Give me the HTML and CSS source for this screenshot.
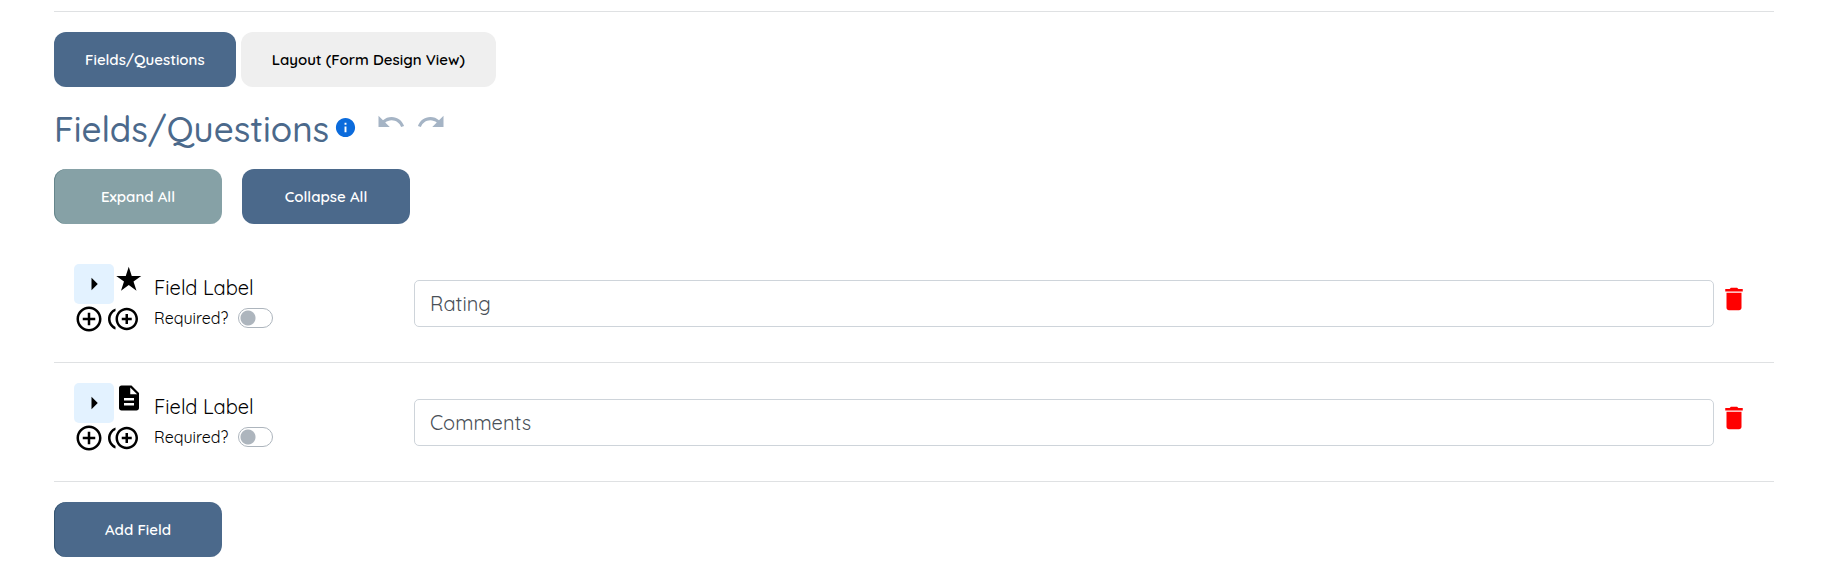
FILE: index.html
```html
<!DOCTYPE html>
<html lang="en">
<head>
    <meta charset="UTF-8">
    <meta name="viewport" content="width=device-width, initial-scale=1.0">
    <title>Fields/Questions</title>
    <link rel="stylesheet" href="styles.css">
</head>
<body>
    <nav class="tabs">
        <button type="button" class="btn tab active">Fields/Questions</button>
        <button type="button" class="btn tab">Layout (Form Design View)</button>
    </nav>

    <div class="title-bar">
        <h1>Fields/Questions</h1>
        <svg class="info" viewBox="0 0 24 24"><path d="M12 2C6.48 2 2 6.48 2 12s4.48 10 10 10 10-4.48 10-10S17.52 2 12 2zm1 15h-2v-6h2v6zm0-8h-2V7h2v2z"/></svg>
        <div class="history">
            <button type="button" class="icon-btn" aria-label="Undo" disabled>
                <svg class="icon" viewBox="0 0 24 24"><path d="M12.5 8c-2.65 0-5.05.99-6.9 2.6L2 7v9h9l-3.62-3.62c1.39-1.16 3.16-1.88 5.12-1.88 3.54 0 6.55 2.31 7.6 5.5l2.37-.78C21.08 11.03 17.15 8 12.5 8z"/></svg>
            </button>
            <button type="button" class="icon-btn" aria-label="Redo" disabled>
                <svg class="icon" viewBox="0 0 24 24"><path d="M18.4 10.6C16.55 8.99 14.15 8 11.5 8c-4.65 0-8.58 3.03-9.96 7.22L3.9 16c1.05-3.19 4.05-5.5 7.6-5.5 1.95 0 3.73.72 5.12 1.88L13 16h9V7l-3.6 3.6z"/></svg>
            </button>
        </div>
    </div>

    <div class="actions">
        <button type="button" class="btn action expand">Expand All</button>
        <button type="button" class="btn action">Collapse All</button>
    </div>

    <form id="fieldsForm">
        <div class="field-row">
            <div class="tools">
                <div class="tools-line">
                    <button type="button" class="toggle" aria-label="Expand field">
                        <svg class="icon" viewBox="0 0 24 24"><path d="m10 17 5-5-5-5v10z"/></svg>
                    </button>
                    <svg class="icon" viewBox="0 0 24 24"><path d="M11.8 2.2 14.2 9.5H21.8L15.6 14 18 21.4 11.8 16.8 5.6 21.4 8 14 1.8 9.5H9.4z"/></svg>
                </div>
                <div class="tools-line add-line">
                    <button type="button" class="icon-btn" aria-label="Add field below">
                        <svg class="icon" viewBox="0 0 24 24"><path d="M13 7h-2v4H7v2h4v4h2v-4h4v-2h-4V7zm-1-5C6.48 2 2 6.48 2 12s4.48 10 10 10 10-4.48 10-10S17.52 2 12 2zm0 18c-4.41 0-8-3.59-8-8s3.59-8 8-8 8 3.59 8 8-3.59 8-8 8z"/></svg>
                    </button>
                    <button type="button" class="icon-btn" aria-label="Duplicate field">
                        <svg class="icon" viewBox="0 0 24 24"><path d="M16 8v3h3v2h-3v3h-2v-3h-3v-2h3V8h2zM2 12c0-2.79 1.64-5.2 4.01-6.32V3.52C2.52 4.76 0 8.09 0 12s2.52 7.24 6.01 8.48v-2.16C3.64 17.2 2 14.79 2 12zm13-9c-4.96 0-9 4.04-9 9s4.04 9 9 9 9-4.04 9-9-4.04-9-9-9zm0 16c-3.86 0-7-3.14-7-7s3.14-7 7-7 7 3.14 7 7-3.14 7-7 7z"/></svg>
                    </button>
                </div>
            </div>
            <div class="labels">
                <label class="field-label" for="field1">Field Label</label>
                <div class="required">
                    <label for="required1">Required?</label>
                    <input type="checkbox" class="switch" id="required1" role="switch">
                </div>
            </div>
            <input type="text" class="field-input" id="field1" value="Rating">
            <button type="button" class="icon-btn delete" aria-label="Delete field">
                <svg class="icon" viewBox="0 0 24 24"><path d="M6 19c0 1.1.9 2 2 2h8c1.1 0 2-.9 2-2V7H6v12zM19 4h-3.5l-1-1h-5l-1 1H5v2h14V4z"/></svg>
            </button>
        </div>

        <div class="field-row">
            <div class="tools">
                <div class="tools-line">
                    <button type="button" class="toggle" aria-label="Expand field">
                        <svg class="icon" viewBox="0 0 24 24"><path d="m10 17 5-5-5-5v10z"/></svg>
                    </button>
                    <svg class="icon" viewBox="0 0 24 24"><path d="M14 2H6c-1.1 0-1.99.9-1.99 2L4 20c0 1.1.89 2 1.99 2H18c1.1 0 2-.9 2-2V8l-6-6zm2 16H8v-2h8v2zm0-4H8v-2h8v2zm-3-5V3.5L18.5 9H13z"/></svg>
                </div>
                <div class="tools-line add-line">
                    <button type="button" class="icon-btn" aria-label="Add field below">
                        <svg class="icon" viewBox="0 0 24 24"><path d="M13 7h-2v4H7v2h4v4h2v-4h4v-2h-4V7zm-1-5C6.48 2 2 6.48 2 12s4.48 10 10 10 10-4.48 10-10S17.52 2 12 2zm0 18c-4.41 0-8-3.59-8-8s3.59-8 8-8 8 3.59 8 8-3.59 8-8 8z"/></svg>
                    </button>
                    <button type="button" class="icon-btn" aria-label="Duplicate field">
                        <svg class="icon" viewBox="0 0 24 24"><path d="M16 8v3h3v2h-3v3h-2v-3h-3v-2h3V8h2zM2 12c0-2.79 1.64-5.2 4.01-6.32V3.52C2.52 4.76 0 8.09 0 12s2.52 7.24 6.01 8.48v-2.16C3.64 17.2 2 14.79 2 12zm13-9c-4.96 0-9 4.04-9 9s4.04 9 9 9 9-4.04 9-9-4.04-9-9-9zm0 16c-3.86 0-7-3.14-7-7s3.14-7 7-7 7 3.14 7 7-3.14 7-7 7z"/></svg>
                    </button>
                </div>
            </div>
            <div class="labels">
                <label class="field-label" for="field2">Field Label</label>
                <div class="required">
                    <label for="required2">Required?</label>
                    <input type="checkbox" class="switch" id="required2" role="switch">
                </div>
            </div>
            <input type="text" class="field-input" id="field2" value="Comments">
            <button type="button" class="icon-btn delete" aria-label="Delete field">
                <svg class="icon" viewBox="0 0 24 24"><path d="M6 19c0 1.1.9 2 2 2h8c1.1 0 2-.9 2-2V7H6v12zM19 4h-3.5l-1-1h-5l-1 1H5v2h14V4z"/></svg>
            </button>
        </div>

        <button type="button" class="btn action add-field">Add Field</button>
    </form>
</body>
</html>
```
FILE: styles.css
```css
* {
    box-sizing: border-box;
}
body {
    margin: 0;
    padding: 11px 47px 0 54px;
    font-family: Quicksand, Lato, sans-serif;
    color: #000;
    background-color: #fff;
}
button,
input {
    font-family: inherit;
    margin: 0;
}
.btn {
    height: 55px;
    border: none;
    border-radius: 12px;
    font-size: 15px;
    font-weight: 600;
    color: #fff;
    background-color: #4b698b;
    cursor: pointer;
}
.tabs {
    display: flex;
    gap: 5px;
    padding-top: 20px;
    border-top: 1px solid #dfe1e3;
}
.tab {
    padding: 0 31px;
    color: #000;
    background-color: #efefef;
}
.tab.active {
    color: #fff;
    background-color: #4b698b;
}
.title-bar {
    display: flex;
    align-items: flex-start;
    padding-top: 20px;
}
h1 {
    margin: 0;
    font-size: 35px;
    line-height: 44px;
    font-weight: 500;
    color: #4b698b;
}
.info {
    width: 23px;
    height: 23px;
    margin: 9px 0 0 5px;
    fill: #0b6bdc;
}
.icon {
    display: block;
    flex: none;
    width: 30px;
    height: 30px;
    fill: currentColor;
}
.icon-btn {
    flex: none;
    padding: 0;
    border: none;
    background: none;
    color: #000;
    cursor: pointer;
}
.history {
    display: flex;
    gap: 10px;
    margin-left: 19px;
}
.history .icon-btn {
    color: #a5b4c5;
}
.actions {
    display: flex;
    gap: 20px;
    margin: 18px 0 20px;
}
.action {
    width: 168px;
}
.expand {
    background-color: #86a1a6;
    box-shadow: inset 1px 0 #65858b;
}
.field-row {
    display: flex;
    align-items: flex-start;
    padding: 20px 25px 28px 20px;
    border-bottom: 1px solid #dfe1e3;
}
.tools {
    width: 80px;
}
.tools-line {
    display: flex;
}
.add-line {
    gap: 4px;
}
.toggle {
    width: 40px;
    height: 40px;
    padding: 5px;
    border: none;
    border-radius: 5px;
    color: #000;
    background-color: #e3f2ff;
    cursor: pointer;
}
.labels {
    width: 260px;
    padding-top: 12px;
}
.field-label {
    display: block;
    font-size: 20px;
    line-height: 24px;
}
.required {
    display: flex;
    align-items: center;
    gap: 10px;
    margin-top: 8px;
    font-size: 16px;
    line-height: 20px;
}
.switch {
    appearance: none;
    width: 35px;
    height: 20px;
    border: 1px solid #adb5bd;
    border-radius: 10px;
    background: radial-gradient(circle at 9px 9px, #adb5bd 7px, transparent 8px);
    cursor: pointer;
}
.switch:checked {
    background: radial-gradient(circle at 24px 9px, #0b6bdc 7px, transparent 8px);
}
.field-input {
    flex: 1;
    min-width: 0;
    height: 47px;
    margin-top: 16px;
    padding: 0 15px;
    border: 1px solid #ced4da;
    border-radius: 5px;
    font-size: 20px;
    color: #495057;
    background-color: #fff;
}
.delete {
    margin: 20px 0 0 5px;
    color: #f00;
}
.add-field {
    margin-top: 20px;
    box-shadow: inset 1px 0 #34536f;
}
```
